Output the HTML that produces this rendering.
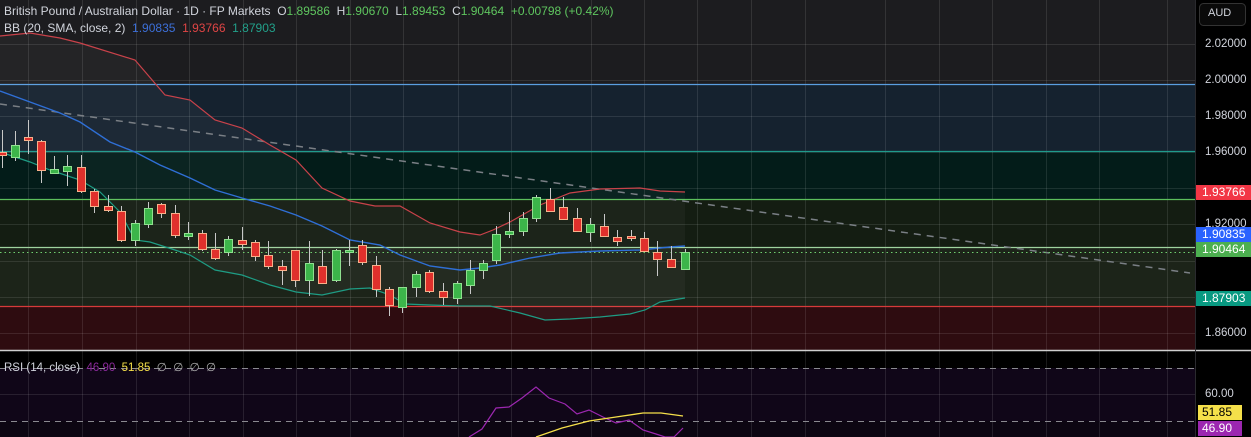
<!DOCTYPE html>
<html><head><meta charset="utf-8"><style>
html,body{margin:0;padding:0;background:#000;width:1251px;height:437px;overflow:hidden;font-family:"Liberation Sans",sans-serif}
.lg{position:absolute;left:4px;font-size:12px;color:#d1d4dc;white-space:nowrap}
.ax{position:absolute;left:1205px;font-size:11.5px;color:#d1d4dc}
.tag{position:absolute;left:1196px;width:55px;height:15px;line-height:15px;font-size:12px;color:#fff;text-indent:6px}
</style></head><body>
<svg width="1251" height="437" style="position:absolute;left:0;top:0">
<rect x="0" y="0" width="1195" height="350" fill="#1c1c1f"/>
<rect x="0" y="84" width="1195" height="67" fill="#15222f"/>
<rect x="0" y="151" width="1195" height="48" fill="#031c19"/>
<rect x="0" y="199" width="1195" height="48" fill="#141d12"/>
<rect x="0" y="247" width="1195" height="59" fill="#1c2419"/>
<rect x="0" y="306" width="1195" height="44" fill="#2e0c10"/>
<rect x="0" y="351" width="1195" height="86" fill="#000"/>
<rect x="0" y="368" width="1195" height="53" fill="#100618"/>
<rect x="0" y="421" width="1195" height="16" fill="#0c0612"/>
<g stroke="rgba(255,255,255,0.1)" stroke-width="1">
<path d="M28.5 0V437M82.5 0V437M136.5 0V437M189.5 0V437M243.5 0V437M296.5 0V437M350.5 0V437M403.5 0V437M458.5 0V437M511.5 0V437M591.5 0V437M644.5 0V437M697.5 0V437M751.5 0V437M805.5 0V437M885.5 0V437M939.5 0V437M992.5 0V437M1046.5 0V437M1099.5 0V437M1167.5 0V437"/>
<path d="M0 44.5H1195M0 80.5H1195M0 116.5H1195M0 152.5H1195M0 188.5H1195M0 224.5H1195M0 261.5H1195M0 297.5H1195M0 333.5H1195M0 394.5H1195"/>
</g>
<g stroke-width="1.3">
<path d="M0 84.5H1195" stroke="#5a9ee0"/>
<path d="M0 151.5H1195" stroke="#1f9a8c"/>
<path d="M0 199.5H1195" stroke="#5cbf5c"/>
<path d="M0 247.5H1195" stroke="#9fd49f"/>
<path d="M0 306.5H1195" stroke="#d63a3a"/>
</g>
<path d="M0 36L30 33 60 38 80 43 135 60 165 95 190 100 215 120 242 128 270 145 296 160 322 188 350 201 375 206 400 206 430 223 460 232 480 235 493 230 510 222 540 205 570 193 600 189 640 188 660 191 685 192 685 298 660 302 645 310 630 314 600 317 570 319 545 320 520 313 490 306 460 306 430 305 405 304 390 295 370 288 350 289 322 295 296 292 270 285 242 275 215 270 190 255 175 250 150 242 135 240 120 212 100 192 80 180 50 170 30 162 0 152Z" fill="rgba(255,255,255,0.035)"/>
<path d="M0 104L1190 273" stroke="#7a7f85" stroke-width="1.5" stroke-dasharray="7 6"/>
<path d="M0 252.5H1195" stroke="#6fcf6f" stroke-width="1" stroke-dasharray="1.5 3"/>
<path d="M0 36L30 33 60 38 80 43 135 60 165 95 190 100 215 120 242 128 270 145 296 160 322 188 350 201 375 206 400 206 430 223 460 232 480 235 493 230 510 222 540 205 570 193 600 189 640 188 660 191 685 192" fill="none" stroke="#c9424a" stroke-width="1.2"/>
<path d="M0 91L30 102 60 113 80 122 110 142 135 152 160 165 190 178 215 190 242 198 270 206 296 215 322 226 350 240 380 245 400 255 430 266 460 270 480 268 500 265 530 258 560 253 600 251 640 250 670 247 685 246" fill="none" stroke="#2f6fd6" stroke-width="1.4"/>
<path d="M0 152L30 162 50 170 80 180 100 192 120 212 135 240 150 242 175 250 190 255 215 270 242 275 270 285 296 292 322 295 350 289 370 288 390 295 405 304 430 305 460 306 490 306 520 313 545 320 570 319 600 317 630 314 645 310 660 302 685 298" fill="none" stroke="#1e9c84" stroke-width="1.2"/>
<g id="c" stroke-width="1"></g>
<path d="M0 368.5H1195M0 421.5H1195" stroke="#8a8a90" stroke-dasharray="6 5"/>
<path d="M469 437L482 429 496 408 509 407 522 398 536 387 549 398 565 404 577 414 589 410 603 417 616 423 629 420 643 430 656 434 665 437 674 437 683 428" fill="none" stroke="#9c27b0" stroke-width="1.2"/>
<path d="M536 437L562 428 589 421 616 417 643 413 661 413 683 416" fill="none" stroke="#f5e04a" stroke-width="1.3"/>
<path d="M0 350.5H1251" stroke="#d0d0d0" stroke-width="1.5"/>
<path d="M1195.5 0V437" stroke="#2a2a2e"/>
<rect x="1199.5" y="3.5" width="46" height="22" rx="4" fill="#0a0a0a" stroke="#333"/>
</svg>
<script>
var d=[[2,152,155,130,168,0],[15,157,145,131,161,1],[28,137,140,120,154,0],[41,141,170,140,183,0],[54,173,169,156,174,1],[67,171,166,155,186,1],[81,167,191,155,193,0],[94,191,206,189,213,0],[108,206,210,195,212,0],[121,211,240,206,242,0],[135,240,223,220,246,1],[148,224,208,202,228,1],[161,204,213,203,218,0],[175,213,235,205,238,0],[188,236,233,222,240,1],[202,233,249,230,251,0],[215,249,258,233,260,0],[228,252,239,236,256,1],[242,240,244,227,250,0],[255,242,256,240,261,0],[268,255,266,241,269,0],[282,266,270,260,285,0],[295,250,280,250,287,0],[309,280,263,241,296,1],[322,266,283,250,284,0],[336,280,250,249,282,1],[349,252,250,240,266,1],[362,245,262,240,265,0],[376,265,289,256,297,0],[389,289,305,287,316,0],[402,307,287,287,313,1],[416,287,274,271,297,1],[429,272,291,270,293,0],[443,291,297,283,305,0],[457,298,283,281,304,1],[470,285,270,260,294,1],[483,270,263,260,279,1],[496,260,234,226,264,1],[509,234,231,212,238,1],[523,231,218,212,236,1],[536,218,197,195,222,1],[550,199,211,188,212,0],[563,207,219,197,220,0],[577,218,231,208,232,0],[590,232,224,218,242,1],[604,226,236,214,237,0],[617,237,241,230,246,0],[631,236,237,230,241,0],[644,238,251,232,252,0],[657,252,259,241,276,0],[671,259,267,246,268,0],[685,269,252,249,270,1]];
var s='';d.forEach(function(c){var x=c[0],t=Math.min(c[1],c[2]),b=Math.max(c[1],c[2]),h=Math.max(b-t,2);
s+='<line x1="'+(x+.5)+'" y1="'+c[3]+'" x2="'+(x+.5)+'" y2="'+c[4]+'" stroke="#c8c8c8"/>';
s+='<rect x="'+(x-3.5)+'" y="'+(t+.5)+'" width="8" height="'+h+'" fill="'+(c[5]?'#3cb54a':'#e0302c')+'" stroke="'+(c[5]?'#8fe08f':'#f7b08a')+'"/>';});
document.getElementById('c').innerHTML=s;
</script>
<div class="lg" style="top:4px">British Pound / Australian Dollar · 1D · FP Markets &nbsp;O<span style="color:#5fc65f">1.89586</span> &nbsp;H<span style="color:#5fc65f">1.90670</span> &nbsp;L<span style="color:#5fc65f">1.89453</span> &nbsp;C<span style="color:#5fc65f">1.90464</span> &nbsp;<span style="color:#5fc65f">+0.00798 (+0.42%)</span></div>
<div class="lg" style="top:21px">BB (20, SMA, close, 2) &nbsp;<span style="color:#3c6fd8">1.90835</span> &nbsp;<span style="color:#e04545">1.93766</span> &nbsp;<span style="color:#22a08a">1.87903</span></div>
<div class="lg" style="top:360px;font-size:11.5px">RSI (14, close) &nbsp;<span style="color:#8a2a9a">46.90</span> &nbsp;<span style="color:#f5e04a">51.85</span> &nbsp;<span style="color:#aaa">∅ &nbsp;∅ &nbsp;∅ &nbsp;∅</span></div>
<div class="ax" style="top:7px;left:1208px;font-size:11px">AUD</div>
<div class="ax" style="top:38px">2.02000</div>
<div class="ax" style="top:74px">2.00000</div>
<div class="ax" style="top:110px">1.98000</div>
<div class="ax" style="top:146px">1.96000</div>
<div class="ax" style="top:218px">1.92000</div>
<div class="ax" style="top:327px">1.86000</div>
<div class="ax" style="top:388px">60.00</div>
<div class="tag" style="top:185px;background:#f23645">1.93766</div>
<div class="tag" style="top:227px;background:#2962ff">1.90835</div>
<div class="tag" style="top:242px;background:#4caf50">1.90464</div>
<div class="tag" style="top:291px;background:#089981">1.87903</div>
<div class="tag" style="top:405px;left:1198px;width:44px;background:#f5e04a;color:#000;text-indent:4px">51.85</div>
<div class="tag" style="top:421px;left:1198px;width:44px;background:#9c27b0;text-indent:4px">46.90</div>
</body></html>
